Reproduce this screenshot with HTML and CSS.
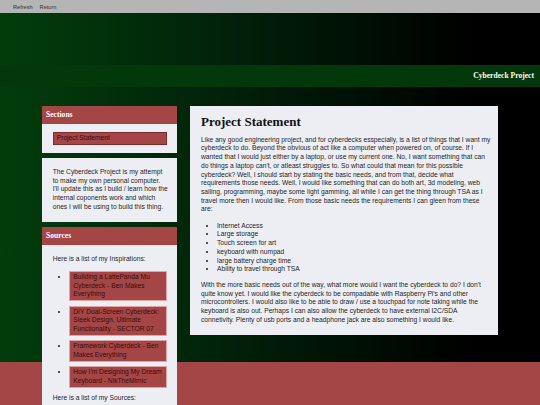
FILE: index.html
```html
<!DOCTYPE html>
<html lang="en">
<head>
<meta charset="utf-8">
<title>Cyberdeck Project</title>
<link rel="stylesheet" href="styles.css">
</head>
<body>
<div class="toolbar">
  <span class="tool">Refresh</span>
  <span class="tool">Return</span>
</div>
<div class="page">
  <header class="site-header">Cyberdeck Project</header>
  <div class="layout">
    <aside class="sidebar">
      <section class="card">
        <h3 class="card-title">Sections</h3>
        <div class="card-body sections-body">
          <div class="section-link">Project Statement</div>
        </div>
      </section>
      <section class="card">
        <div class="card-body intro-body">
          <p>The Cyberdeck Project is my attempt to make my own personal computer.<br>I'll update this as I build / learn how the internal coponents work and which ones I will be using to build this thing.</p>
        </div>
      </section>
      <section class="card">
        <h3 class="card-title">Sources</h3>
        <div class="card-body sources-body">
          <p>Here is a list of my Inspirations:</p>
          <ul class="src-list">
            <li><span class="src">Building a LattePanda Mu Cyberdeck - Ben Makes Everything</span></li>
            <li><span class="src">DIY Dual-Screen Cyberdeck: Sleek Design, Ultimate Functionality - SECTOR 07</span></li>
            <li><span class="src">Framework Cyberdeck - Ben Makes Everything</span></li>
            <li><span class="src">How I'm Designing My Dream Keyboard - NikTheMimic</span></li>
          </ul>
          <p>Here is a list of my Sources:</p>
        </div>
      </section>
    </aside>
    <main class="content">
      <h1>Project Statement</h1>
      <p>Like any good engineering project, and for cyberdecks esspecially, is a list of things that I want my cyberdeck to do. Beyond the obvious of act like a computer when powered on, of course. If I wanted that I would just either by a laptop, or use my current one. No, I want something that can do things a laptop can't, or atleast struggles to. So what could that mean for this possible cyberdeck? Well, I should start by stating the basic needs, and from that, decide what requirements those needs. Well, I would like something that can do both art, 3d modeling, web sailing, programming, maybe some light gamming, all while I can get the thing through TSA as I travel more then I would like. From those basic needs the requirements I can gleen from these<br>are:</p>
      <ul class="req-list">
        <li>Internet Access</li>
        <li>Large storage</li>
        <li>Touch screen for art</li>
        <li>keyboard with numpad</li>
        <li>large battery charge time</li>
        <li>Ability to travel through TSA</li>
      </ul>
      <p>With the more basic needs out of the way, what more would I want the cyberdeck to do? I don't quite know yet. I would like the cyberdeck to be compadable with Raspberry Pi's and other microcontrollers. I would also like to be able to draw / use a touchpad for note taking while the keyboard is also out. Perhaps I can also allow the cyberdeck to have external I2C/SDA<br>connetivity. Plenty of usb ports and a headphone jack are also something I would like.</p>
    </main>
  </div>
</div>
</body>
</html>
```

FILE: styles.css
```css
* { box-sizing: border-box; }

html, body {
  margin: 0;
  padding: 0;
}

body {
  background: #a54646;
  font-family: "Liberation Sans", Arial, sans-serif;
  font-size: 6.7px;
  line-height: 8.7px;
  color: #1e1e1e;
  overflow: hidden;
  height: 405px;
}

.toolbar {
  height: 13px;
  background: #b5b5b5;
  display: flex;
  align-items: center;
  gap: 7px;
  padding-left: 13px;
  font-size: 5.6px;
  line-height: 6px;
  color: #333;
}

.page {
  height: 349px;
  background: linear-gradient(to right, #023d0b 0%, #01230a 40%, #000 88%);
  padding-top: 52px;
}

.site-header {
  height: 22px;
  background: #03390a;
  color: #fff;
  font-family: "Liberation Serif", "Times New Roman", serif;
  font-weight: bold;
  font-size: 7.6px;
  line-height: 22px;
  text-align: right;
  padding-right: 6px;
}

.layout {
  display: flex;
  align-items: flex-start;
  gap: 13px;
  padding-left: 42px;
  margin-top: 19px;
}

.sidebar {
  width: 135px;
  display: flex;
  flex-direction: column;
  gap: 4.5px;
}

.card {
  background: #eceef3;
}

.card-title {
  margin: 0;
  height: 18px;
  background: #a54646;
  color: #fff;
  font-family: "Liberation Serif", "Times New Roman", serif;
  font-weight: bold;
  font-size: 7.6px;
  line-height: 18px;
  padding-left: 4px;
}

.card-body p { margin: 0; }

.sections-body {
  padding: 8px 10.3px 8.3px 10.7px;
}

.section-link {
  background: #a54646;
  border: 1px solid #7c2c2c;
  color: #3a0c0c;
  padding: 1.2px 3px;
}

.intro-body {
  padding: 10px 8.7px 11px 10.7px;
}

.sources-body {
  padding: 10.3px 10.3px 10px 10.7px;
}

.src-list {
  margin: 7px 0 6.4px;
  padding-left: 16.6px;
  list-style: disc;
}

.src-list li + li { margin-top: 4.2px; }

.src {
  display: block;
  background: #a54646;
  border: 1px solid #e2a3a3;
  color: #3a0c0c;
  padding: 1.2px 3px;
}

.content {
  width: 307.5px;
  background: #eceef3;
  padding: 8px 5.5px 10.8px 11px;
}

.content h1 {
  margin: 0 0 6.7px;
  font-family: "Liberation Serif", "Times New Roman", serif;
  font-weight: bold;
  font-size: 13px;
  line-height: 15px;
  color: #111;
}

.content p {
  margin: 0;
  width: 291px;
}

.req-list {
  margin: 7.7px 0 7px;
  padding-left: 16px;
}
```
